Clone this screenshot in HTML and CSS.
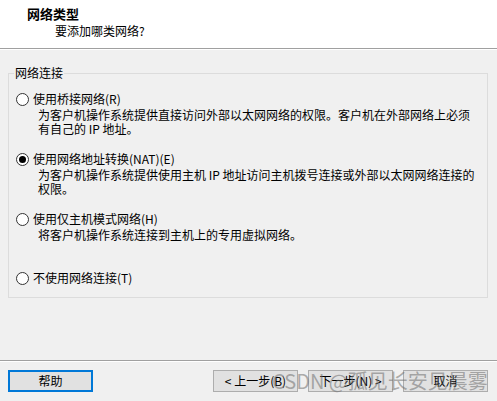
FILE: index.html
```html
<!DOCTYPE html>
<html lang="zh-CN">
<head>
<meta charset="utf-8">
<title>网络类型</title>
<link rel="stylesheet" href="styles.css">
</head>
<body>
<div class="window">
  <div class="header">
    <div class="title">网络类型</div>
    <div class="subtitle">要添加哪类网络?</div>
  </div>
  <div class="sep"></div>
  <div class="content">
    <fieldset class="group">
      <legend class="legend">网络连接</legend>
      <div class="option">
        <div class="opt-label"><span class="radio"></span>使用桥接网络(R)</div>
        <div class="desc">为客户机操作系统提供直接访问外部以太网网络的权限。客户机在外部网络上必须<br>有自己的 IP 地址。</div>
      </div>
      <div class="option">
        <div class="opt-label"><span class="radio checked"></span>使用网络地址转换(NAT)(E)</div>
        <div class="desc">为客户机操作系统提供使用主机 IP 地址访问主机拨号连接或外部以太网网络连接的<br>权限。</div>
      </div>
      <div class="option">
        <div class="opt-label"><span class="radio"></span>使用仅主机模式网络(H)</div>
        <div class="desc">将客户机操作系统连接到主机上的专用虚拟网络。</div>
      </div>
      <div class="option last">
        <div class="opt-label"><span class="radio"></span>不使用网络连接(T)</div>
      </div>
    </fieldset>
  </div>
  <div class="sep bottom-sep"></div>
  <div class="footer">
    <button class="btn default">帮助</button>
    <div class="nav">
      <button class="btn">&lt; 上一步(B)</button>
      <button class="btn">下一步(N) &gt;</button>
      <button class="btn">取消</button>
    </div>
    <div class="watermark">CSDN @孤见长安见晨雾</div>
  </div>
</div>
</body>
</html>
```

FILE: styles.css
```css
* { box-sizing: border-box; }
html, body { margin: 0; padding: 0; }
body {
  width: 497px;
  height: 401px;
  overflow: hidden;
  background: #f0f0f0;
  font-family: "Noto Sans CJK SC", "Noto Sans", sans-serif;
  font-size: 12px;
  line-height: 14px;
  color: #000;
}
.window {
  display: flex;
  flex-direction: column;
  height: 401px;
}
.header {
  height: 48px;
  background: #fff;
  padding: 7px 0 0 27px;
}
.title {
  font-weight: bold;
  font-size: 13px;
}
.subtitle {
  margin: 3px 0 0 28px;
}
.sep {
  height: 2px;
  border-top: 1px solid #a0a0a0;
  border-bottom: 1px solid #ffffff;
}
.content {
  padding: 16px 9px 0 8px;
}
.group {
  margin: 0;
  width: 480px;
  border: 1px solid #dcdcdc;
  padding: 0 7px 10px 7px;
}
.legend {
  padding: 0 1px;
  margin-left: -2px;
}
.option {
  margin-top: 16px;
}
.option:first-of-type {
  margin-top: 12px;
}
.option.last {
  margin-top: 29px;
}
.opt-label {
  display: flex;
  align-items: center;
  height: 14px;
  margin-bottom: 2px;
}
.radio {
  width: 13px;
  height: 13px;
  border: 1px solid #333;
  border-radius: 50%;
  background: #fff;
  margin-right: 4px;
  flex: none;
  display: flex;
  align-items: center;
  justify-content: center;
}
.radio.checked::after {
  content: "";
  width: 7px;
  height: 7px;
  border-radius: 50%;
  background: #000;
}
.desc {
  padding-left: 22px;
}
.bottom-sep {
  margin-top: auto;
}
.footer {
  position: relative;
  height: 39px;
  display: flex;
  align-items: flex-start;
  padding: 8px 9px 0 8px;
}
.btn {
  font-family: inherit;
  font-size: 12px;
  line-height: 14px;
  width: 85px;
  height: 22px;
  background: #e1e1e1;
  border: 1px solid #adadad;
  padding: 0;
  color: #000;
}
.btn.default {
  border: 2px solid #0078d7;
}
.nav {
  margin-left: auto;
  display: flex;
  gap: 10px;
}
.watermark {
  position: absolute;
  left: 272px;
  top: 8px;
  font-size: 20px;
  line-height: 22px;
  color: rgba(110, 110, 110, 0.55);
  white-space: nowrap;
  pointer-events: none;
}
```
